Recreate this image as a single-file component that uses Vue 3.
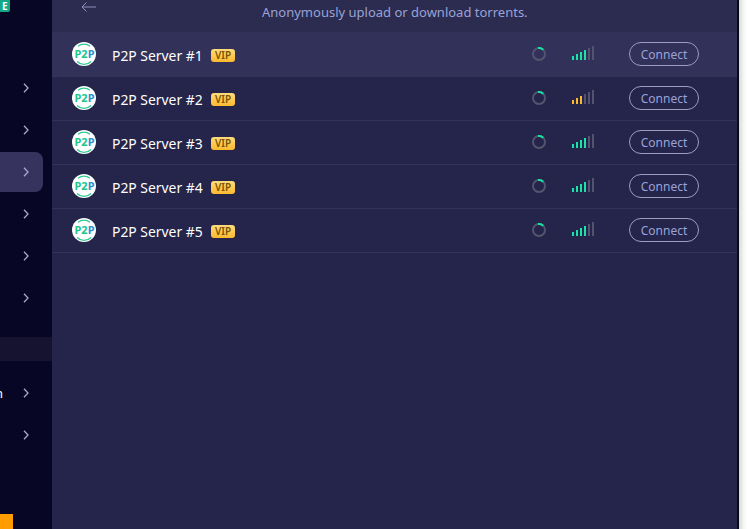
<script setup>
const servers = [
  { name: 'P2P Server #1', level: 4, color: '#1be3a5', active: true },
  { name: 'P2P Server #2', level: 3, color: '#fdb92e' },
  { name: 'P2P Server #3', level: 4, color: '#1be3a5' },
  { name: 'P2P Server #4', level: 4, color: '#1be3a5' },
  { name: 'P2P Server #5', level: 4, color: '#1be3a5' }
]
const bars = [4, 6, 8, 10, 12, 14]
const navTop = [1, 2, 3, 4, 5, 6]
</script>

<template>
  <div class="window">
    <aside class="side">
      <div class="badge-e">E</div>
      <div class="nav nav-top">
        <div v-for="n in navTop" :key="n" class="nav-item" :class="{ sel: n === 3 }">
          <svg class="chev" width="6" height="10" viewBox="0 0 6 10"><path d="M1 .8l4 4.200-4 4.200" fill="none" stroke="#a9a8cb" stroke-width="1.300"/></svg>
        </div>
      </div>
      <div class="band"></div>
      <div class="nav nav-bottom">
        <div class="nav-item clip-row">
          <span class="clipped">n</span>
          <svg class="chev" width="6" height="10" viewBox="0 0 6 10"><path d="M1 .8l4 4.200-4 4.200" fill="none" stroke="#a9a8cb" stroke-width="1.300"/></svg>
        </div>
        <div class="nav-item">
          <svg class="chev" width="6" height="10" viewBox="0 0 6 10"><path d="M1 .8l4 4.200-4 4.200" fill="none" stroke="#a9a8cb" stroke-width="1.300"/></svg>
        </div>
      </div>
      <div class="orange"></div>
    </aside>

    <main class="main">
      <header class="head">
        <svg class="back" width="15" height="10" viewBox="0 0 15 10"><path d="M15 5H1M5.500 .5L1 5l4.500 4.500" fill="none" stroke="#8f8fb8" stroke-width="1"/></svg>
        <p class="sub">Anonymously upload or download torrents.</p>
      </header>
      <ul class="list">
        <li v-for="s in servers" :key="s.name" class="row" :class="{ active: s.active }">
          <svg class="logo" width="24" height="24" viewBox="0 0 24 24">
            <circle cx="12" cy="12" r="12" fill="#fff"/>
            <path d="M6 4.200A9.800 9.800 0 0 1 18 4.200" fill="none" stroke="#2ecb94" stroke-width="1.200"/>
            <path d="M5 19.500A10 10 0 0 0 19 19.500" fill="none" stroke="#2ecb94" stroke-width="1.300"/>
            <text x="2.500" y="15.800" class="logo-t"><tspan fill="#22c48d">P2</tspan><tspan fill="#2a8fd0">P</tspan></text>
          </svg>
          <span class="name">{{ s.name }}</span>
          <span class="vip">VIP</span>
          <svg class="spin" width="14" height="14" viewBox="0 0 14 14">
            <circle cx="7" cy="7" r="6" fill="none" stroke="#55546f" stroke-width="2"/>
            <path d="M6 1.100A6 6 0 0 1 11.200 2.700" fill="none" stroke="#1be3a5" stroke-width="2"/>
          </svg>
          <span class="signal">
            <i v-for="(h, i) in bars" :key="i" :style="{ height: h + 'px', background: i < s.level ? s.color : '#53526f' }"></i>
          </span>
          <button class="connect">Connect</button>
        </li>
      </ul>
    </main>

    <div class="edge"></div>
  </div>
</template>

<style>
html, body { margin: 0; background: #fff; }
</style>

<style scoped>
.window {
  display: flex;
  width: 747px;
  height: 529px;
  overflow: hidden;
  font-family: "Noto Sans", "Open Sans", sans-serif;
}
.side {
  position: relative;
  width: 52px;
  flex: none;
  background: #080625;
  display: flex;
  flex-direction: column;
}
.badge-e {
  position: absolute;
  left: 0;
  top: 0;
  width: 10px;
  height: 12px;
  padding: 1px 0 0 2px;
  box-sizing: border-box;
  background: #12a884;
  border-radius: 0 0 2px 0;
  color: #fff;
  font: 700 10px/11px "Noto Sans", sans-serif;
}
.nav { display: flex; flex-direction: column; }
.nav-top { margin-top: 67px; }
.nav-item {
  height: 42px;
  width: 43px;
  display: flex;
  align-items: center;
  justify-content: flex-end;
  padding-right: 14px;
  box-sizing: border-box;
}
.nav-item.sel {
  height: 40px;
  margin: 1px 0;
  background: #36345f;
  border-radius: 0 8px 8px 0;
}
.band {
  height: 24px;
  margin-top: 18px;
  background: #15132f;
}
.nav-bottom { margin-top: 11px; }
.clip-row { position: relative; }
.clipped {
  position: absolute;
  left: -5px;
  top: 12px;
  color: #fff;
  font-size: 13px;
  line-height: 18px;
}
.orange {
  position: absolute;
  left: 0;
  bottom: 0;
  width: 13px;
  height: 15px;
  background: #ff9c00;
}
.main {
  width: 685px;
  flex: none;
  background: #25244a;
  display: flex;
  flex-direction: column;
}
.head {
  position: relative;
  height: 32px;
  background: #2c2b50;
}
.back { position: absolute; left: 29px; top: 2px; }
.sub {
  margin: 0;
  padding-left: 210px;
  padding-top: 3px;
  color: #99a3d6;
  font-size: 13px;
  line-height: 18px;
  white-space: nowrap;
}
.list { list-style: none; margin: 0; padding: 0; }
.row {
  height: 44px;
  display: flex;
  align-items: center;
  padding-left: 20px;
  box-sizing: border-box;
  box-shadow: 0 1px 0 #32315a;
}
.row.active { background: #32315a; }
.logo { flex: none; }
.logo-t { font: 700 11px "Noto Sans", sans-serif; }
.name {
  margin-left: 16px;
  margin-top: 2px;
  width: 99px;
  color: #fff;
  font-size: 13.900px;
  white-space: nowrap;
}
.vip {
  width: 24px;
  height: 13px;
  margin-top: 3px;
  background: linear-gradient(#ffdc7a, #fdb92e);
  border-radius: 3px;
  color: #7a5200;
  font-size: 10px;
  font-weight: 600;
  line-height: 13px;
  text-align: center;
}
.spin {
  flex: none;
  margin-left: 297px;
}
.signal {
  margin-left: 26px;
  margin-top: -2px;
  display: flex;
  align-items: flex-end;
  gap: 2px;
  height: 14px;
}
.signal i { display: block; width: 2px; }
.connect {
  margin-left: 35px;
  width: 70px;
  height: 24px;
  box-sizing: border-box;
  background: transparent;
  border: 1px solid #9d9cc0;
  border-radius: 12px;
  color: #99a3d6;
  font: 12px/20px "Noto Sans", sans-serif;
  padding: 2px 0 0;
}
.edge {
  width: 10px;
  flex: none;
  border-left: 2px solid #0a0a14;
  box-sizing: border-box;
  background: linear-gradient(90deg, #d9d9d9, #f6f6f6 60%, #fff);
}
</style>
